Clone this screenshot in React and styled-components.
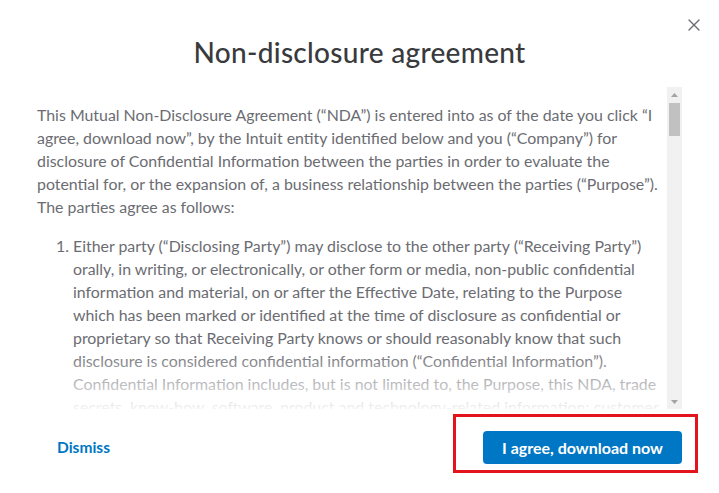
import React from "react";
import styled, { createGlobalStyle } from "styled-components";

const Global = createGlobalStyle`
  html, body { margin: 0; padding: 0; background: #ffffff; }
  body { font-family: Lato, "Open Sans", Arial, sans-serif; }
  * { box-sizing: border-box; }
`;

const Dialog = styled.div`
  position: relative;
  width: 719px;
  height: 493px;
  background: #fff;
  display: flex;
  flex-direction: column;
  overflow: hidden;
`;

const CloseButton = styled.button`
  position: absolute;
  top: 16px;
  right: 16px;
  width: 18px;
  height: 18px;
  padding: 0;
  border: 0;
  background: transparent;
  display: flex;
  align-items: center;
  justify-content: center;
  cursor: pointer;
`;

const Title = styled.h1`
  margin: 0;
  padding-top: 36px;
  height: 87px;
  text-align: center;
  font-family: Lato, sans-serif;
  font-weight: 500;
  font-size: 28px;
  line-height: 32px;
  letter-spacing: 0.3px;
  color: #393a3d;
`;

const ScrollWrap = styled.div`
  display: flex;
  margin-left: 35px;
  width: 647px;
  height: 322px;
`;

const TextPane = styled.div`
  position: relative;
  flex: 1;
  min-width: 0;
`;

const Scroller = styled.div`
  height: 100%;
  overflow-y: auto;
  overflow-x: hidden;
  scrollbar-width: none;
  padding: 16px 0 0 2px;
  color: #6b6c72;
  font-family: Lato, sans-serif;
  font-size: 15.9px;
  line-height: 23px;
  &::-webkit-scrollbar { display: none; }
`;

const Fade = styled.div`
  position: absolute;
  left: 0;
  right: 0;
  bottom: 0;
  height: 60px;
  pointer-events: none;
  background: linear-gradient(rgba(255,255,255,0), rgba(255,255,255,0.92));
`;

const ScrollBar = styled.div`
  width: 15px;
  flex: none;
  display: flex;
  flex-direction: column;
  background: #f1f1f1;
`;

const ScrollArrow = styled.div`
  height: 15px;
  display: flex;
  align-items: center;
  justify-content: center;
`;

const Thumb = styled.div`
  height: 33px;
  margin: 1px 2px 0;
  background: #c1c1c1;
`;

const TrackRest = styled.div`
  flex: 1;
`;

const Para = styled.p`
  margin: 0 0 16px;
  white-space: nowrap;
`;

const List = styled.ol`
  margin: 0;
  padding-left: 36px;
`;

const Item = styled.li`
  white-space: nowrap;
  margin-bottom: 16px;
`;

const Footer = styled.div`
  flex: 1;
  display: flex;
  align-items: center;
  justify-content: space-between;
  padding: 0 37px 8px 57px;
`;

const LinkButton = styled.button`
  border: 0;
  background: transparent;
  padding: 0;
  font-family: Lato, sans-serif;
  font-weight: 700;
  font-size: 15.5px;
  color: #0077c5;
  cursor: pointer;
`;

const PrimaryButton = styled.button`
  width: 199px;
  height: 33px;
  border: 0;
  border-radius: 4px;
  background: #0077c5;
  color: #fff;
  font-family: Lato, sans-serif;
  font-weight: 700;
  font-size: 16px;
  cursor: pointer;
`;

const Highlight = styled.div`
  position: absolute;
  left: 453px;
  top: 414px;
  width: 245px;
  height: 59px;
  border: 3px solid #e3141b;
  pointer-events: none;
`;

const Arrow = ({ down }) => (
  <svg width="7" height="4" viewBox="0 0 7 4">
    <path d={down ? "M0 0 H7 L3.5 4 Z" : "M0 4 H7 L3.5 0 Z"} fill="#a3a3a3" />
  </svg>
);

export default function App() {
  return (
    <>
      <Global />
      <Dialog>
        <CloseButton aria-label="Close">
          <svg width="12" height="12" viewBox="0 0 12 12">
            <path d="M1 1 L11 11 M11 1 L1 11" stroke="#6b6c72" strokeWidth="1.4" strokeLinecap="round" />
          </svg>
        </CloseButton>
        <Title>Non-disclosure agreement</Title>
        <ScrollWrap>
          <TextPane>
            <Scroller>
              <Para>
                This Mutual Non-Disclosure Agreement (“NDA”) is entered into as of the date you click “I<br />
                agree, download now”, by the Intuit entity identified below and you (“Company”) for<br />
                disclosure of Confidential Information between the parties in order to evaluate the<br />
                potential for, or the expansion of, a business relationship between the parties (“Purpose”).<br />
                The parties agree as follows:
              </Para>
              <List>
                <Item>
                  Either party (“Disclosing Party”) may disclose to the other party (“Receiving Party”)<br />
                  orally, in writing, or electronically, or other form or media, non-public confidential<br />
                  information and material, on or after the Effective Date, relating to the Purpose<br />
                  which has been marked or identified at the time of disclosure as confidential or<br />
                  proprietary so that Receiving Party knows or should reasonably know that such<br />
                  disclosure is considered confidential information (“Confidential Information”).<br />
                  Confidential Information includes, but is not limited to, the Purpose, this NDA, trade<br />
                  secrets, know-how, software, product and technology-related information; customer<br />
                  lists, business plans, financial information and other information of a similar nature.
                </Item>
                <Item>
                  Receiving Party shall use the Confidential Information solely for the Purpose and<br />
                  shall not disclose it to any third party without prior written consent.
                </Item>
              </List>
            </Scroller>
            <Fade />
          </TextPane>
          <ScrollBar>
            <ScrollArrow><Arrow /></ScrollArrow>
            <Thumb />
            <TrackRest />
            <ScrollArrow><Arrow down /></ScrollArrow>
          </ScrollBar>
        </ScrollWrap>
        <Footer>
          <LinkButton>Dismiss</LinkButton>
          <PrimaryButton>I agree, download now</PrimaryButton>
        </Footer>
        <Highlight />
      </Dialog>
    </>
  );
}
